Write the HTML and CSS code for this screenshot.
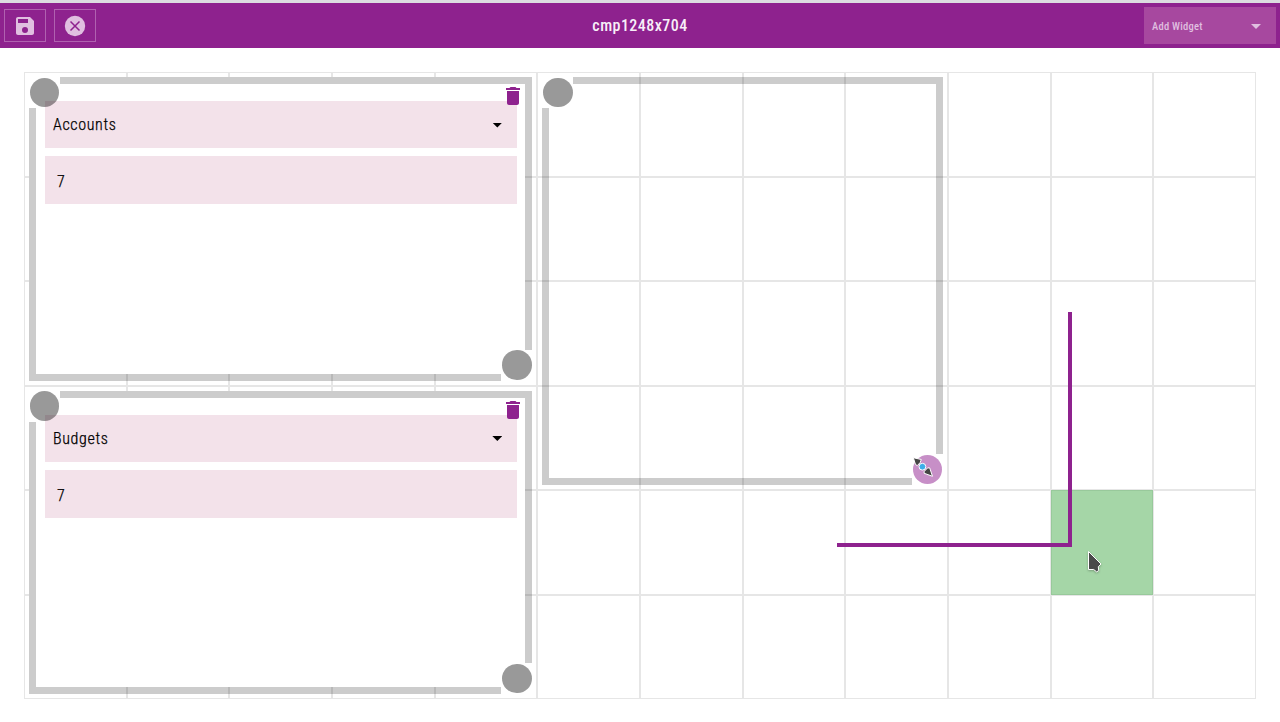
FILE: index.html
```
<!DOCTYPE html>
<html lang="en">
<head>
<meta charset="utf-8">
<title>Dashboard editor</title>
<link rel="stylesheet" href="styles.css">
</head>
<body>
<header class="toolbar">
  <div class="actions">
    <button class="tool" aria-label="Save"><svg width="24" height="24" viewBox="0 0 24 24"><path fill="currentColor" fill-rule="evenodd" d="M17 3H5c-1.100 0-2 .9-2 2v14c0 1.100.9 2 2 2h14c1.100 0 2-.9 2-2V7zM12 19a3 3 0 1 1 0-6 3 3 0 0 1 0 6zM15 9H5V5h10z"/></svg></button>
    <button class="tool" aria-label="Cancel"><svg width="24" height="24" viewBox="0 0 24 24"><circle cx="12" cy="12" r="10.200" fill="currentColor"/><path d="M7.500 7.500l9 9M16.500 7.500l-9 9" stroke="#8e228e" stroke-width="1.500"/></svg></button>
  </div>
  <h1 class="title">cmp1248x704</h1>
  <div class="add"><span>Add Widget</span><i class="caret"></i></div>
</header>
<main class="board" id="board">
  <section class="widget accounts">
    <div class="content">
      <div class="field select"><span>Accounts</span><i class="caret"></i></div>
      <div class="field value"><span>7</span></div>
    </div>
    <svg class="trash" width="24" height="24" viewBox="0 0 24 24"><path d="M6 19c0 1.100.9 2 2 2h8c1.100 0 2-.9 2-2V7H6zM19 4h-3.500l-1-1h-5l-1 1H5v2h14z"/></svg>
    <i class="bar top"></i><i class="bar right"></i><i class="bar bottom"></i><i class="bar left"></i>
    <i class="handle start"></i><i class="handle end"></i>
  </section>
  <section class="widget budgets">
    <div class="content">
      <div class="field select"><span>Budgets</span><i class="caret"></i></div>
      <div class="field value"><span>7</span></div>
    </div>
    <svg class="trash" width="24" height="24" viewBox="0 0 24 24"><path d="M6 19c0 1.100.9 2 2 2h8c1.100 0 2-.9 2-2V7H6zM19 4h-3.500l-1-1h-5l-1 1H5v2h14z"/></svg>
    <i class="bar top"></i><i class="bar right"></i><i class="bar bottom"></i><i class="bar left"></i>
    <i class="handle start"></i><i class="handle end"></i>
  </section>
  <section class="widget empty">
    <i class="bar top"></i><i class="bar right"></i><i class="bar bottom"></i><i class="bar left"></i>
    <i class="handle start"></i><i class="handle end active"></i>
  </section>
</main>
<div class="preview"></div>
<svg class="resize-cursor" width="24" height="24" viewBox="0 0 24 24"><g fill="#454545" stroke="#fff" stroke-width="1"><path d="M2.300 2.700L10.300 4.500 9.200 7.500 6.300 10.600 4.500 9.500zM21.500 21.300L13 18.200 13.300 16.300 16.600 12.900 18.700 12.900z"/><circle cx="11.400" cy="11.700" r="3.400" fill="#3daee9"/></g></svg>
<svg class="pointer" width="18" height="26" viewBox="0 0 18 26"><path d="M2.500 1.500v18h5.200l3 2.400 2-1.400-.4-3.700L15 14z" fill="#4a4a4a" stroke="#fff" stroke-width="1"/></svg>
<script src="board.js"></script>
</body>
</html>
```
FILE: styles.css
```
* { box-sizing: border-box; }
body {
  margin: 0;
  height: 722px;
  overflow: hidden;
  background: #fff;
  color: #000;
  font-family: "Roboto Condensed", Roboto, sans-serif;
  font-stretch: 75%;
  font-size: 16px;
}
.toolbar {
  height: 48px;
  padding: 4px 4px 0;
  border-top: 3px solid #dcdce0;
  background: #8e228e;
  color: #e0bfe0;
  display: grid;
  grid-template-columns: 1fr auto 1fr;
}
.actions { display: flex; gap: 8px; padding-top: 2px; }
.tool {
  width: 42px;
  height: 33px;
  padding: 0;
  border: 1px solid #b061b0;
  background: none;
  color: inherit;
  display: flex;
  align-items: center;
  justify-content: center;
}
.title {
  margin: 0;
  font-size: 16px;
  line-height: 37px;
  font-weight: 500;
  letter-spacing: .45px;
  color: #f8eff8;
}
.add {
  justify-self: end;
  width: 132px;
  height: 37px;
  padding: 2px 15px 0 8px;
  background: #a7489f;
  display: flex;
  align-items: center;
  justify-content: space-between;
  font-size: 10.500px;
  font-weight: 500;
  letter-spacing: .25px;
}
.caret {
  width: 10px;
  height: 5px;
  background: currentColor;
  clip-path: polygon(0 0, 100% 0, 50% 100%);
}
.select .caret { margin-top: 1px; }
.board {
  width: 1232px;
  height: 627px;
  margin: 24px;
  display: grid;
  grid-template: repeat(6, 1fr) / repeat(12, 1fr);
}
.cell { border: 1px solid #e6e6e6; }
.cell.target { background: #a5d6a7; border-color: #98c99b; }
.widget { position: relative; margin: 5px; z-index: 1; }
.accounts { grid-area: 1 / 1 / 4 / 6; }
.budgets { grid-area: 4 / 1 / 7 / 6; }
.empty { grid-area: 1 / 6 / 5 / 10; }
.content {
  height: calc(100% - 7px);
  margin-right: 7px;
  padding: 24px 8px 0 16px;
  background: #fff;
  display: flex;
  flex-direction: column;
  gap: 8px;
}
.field {
  height: 48px;
  background: #f3e2ea;
  display: flex;
  align-items: center;
  justify-content: space-between;
  font-weight: 300;
  letter-spacing: .65px;
  -webkit-text-stroke: .25px #000;
}
.select { height: 47px; padding: 0 15px 0 8px; }
.value { padding: 3px 12px 0; }
.trash { position: absolute; right: 7px; top: 7px; fill: #8e228e; }
.bar { position: absolute; background: rgba(0, 0, 0, .2); }
.top { top: 0; left: 31px; right: 0; height: 7px; }
.right { top: 7px; right: 0; bottom: 31px; width: 7px; }
.bottom { bottom: 0; left: 0; right: 31px; height: 7px; }
.left { top: 31px; left: 0; bottom: 7px; width: 7px; }
.handle {
  position: absolute;
  width: 29.400px;
  height: 29.400px;
  border-radius: 50%;
  background: rgba(0, 0, 0, .4);
}
.start { top: .7px; left: .8px; }
.end { bottom: .7px; right: .8px; }
.active { background: #c78fc7; }
.preview {
  position: absolute;
  z-index: 2;
  left: 837px;
  top: 312px;
  width: 235px;
  height: 235px;
  border: solid #8e228e;
  border-width: 0 4px 4px 0;
}
.resize-cursor { position: absolute; z-index: 3; left: 911px; top: 455px; }
.pointer {
  position: absolute;
  z-index: 3;
  left: 1086px;
  top: 550px;
  filter: drop-shadow(0 1px 1px rgba(0, 0, 0, .25));
}
```
FILE: board.js
```
const board = document.getElementById('board');
for (let row = 1; row <= 6; row++) {
  for (let col = 1; col <= 12; col++) {
    const cell = document.createElement('div');
    cell.className = row === 5 && col === 11 ? 'cell target' : 'cell';
    cell.style.gridArea = `${row} / ${col}`;
    board.append(cell);
  }
}
```
